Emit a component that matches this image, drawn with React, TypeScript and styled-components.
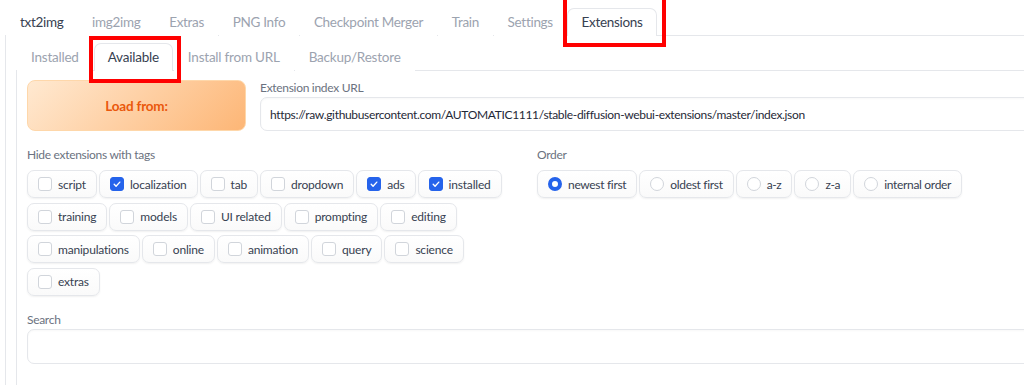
import React from 'react'
import styled, { createGlobalStyle } from 'styled-components'

const GlobalStyle = createGlobalStyle`
  body {
    margin: 0;
    background: #ffffff;
    font-family: Lato, "Open Sans", "Liberation Sans", sans-serif;
    overflow: hidden;
  }
`

const Page = styled.div`
  width: 1050px;
  padding-left: 5px;
  position: relative;
`

const TabNav = styled.div<{ $inner?: boolean }>`
  display: flex;
  gap: ${(p) => (p.$inner ? '1px' : '0.6px')};
  padding-left: 1px;
  padding-top: ${(p) => (p.$inner ? '0' : '8px')};
  border-bottom: 1px solid #e5e7eb;
`

const Tab = styled.div<{ $active?: boolean; $dark?: boolean; $inner?: boolean }>`
  height: 27px;
  line-height: 27px;
  padding: 0 13px;
  border: 1px solid ${(p) => (p.$active ? '#e5e7eb' : 'transparent')};
  border-bottom: none;
  border-radius: 7px 7px 0 0;
  margin-bottom: -1px;
  background: #fff;
  font-size: 13.5px;
  letter-spacing: ${(p) => (p.$inner ? '-0.22px' : '-0.3px')};
  white-space: nowrap;
  color: ${(p) => (p.$active || p.$dark ? '#374151' : '#9ca3af')};
`

const Panel = styled.div<{ $pad: string }>`
  border: 1px solid #e5e7eb;
  border-top: none;
  padding: ${(p) => p.$pad};
`

const Row = styled.div<{ $top?: number }>`
  display: flex;
  gap: 14px;
  align-items: flex-start;
  margin-top: ${(p) => p.$top ?? 0}px;
`

const Column = styled.div<{ $top?: number }>`
  flex: 1;
  min-width: 0;
  margin-top: ${(p) => p.$top ?? 0}px;
`

const LoadButton = styled.button`
  width: 219px;
  height: 51px;
  flex: none;
  border: 1px solid #fed7aa;
  border-radius: 8px;
  background: linear-gradient(135deg, #ffe9d1 0%, #fdb676 100%);
  color: #ea580c;
  font-family: inherit;
  font-weight: 700;
  font-size: 13.5px;
  letter-spacing: -0.2px;
`

const Label = styled.div<{ $gapBelow: number }>`
  font-size: 12px;
  line-height: 16px;
  letter-spacing: -0.3px;
  color: #6b7280;
  margin-bottom: ${(p) => p.$gapBelow}px;
`

const TextInput = styled.div<{ $h: number }>`
  height: ${(p) => p.$h}px;
  box-sizing: border-box;
  border: 1px solid #e5e7eb;
  border-radius: 7px;
  box-shadow: inset 0 1px 2px rgba(0, 0, 0, 0.03);
  padding: 0 9px;
  display: flex;
  align-items: center;
  font-size: 12px;
  letter-spacing: -0.33px;
  color: #1f2937;
  white-space: nowrap;
  overflow: hidden;
`

const ChipWrap = styled.div`
  display: flex;
  flex-wrap: wrap;
  gap: 4.5px 2px;
`

const Chip = styled.label<{ $radio?: boolean }>`
  height: 28px;
  box-sizing: border-box;
  display: inline-flex;
  align-items: center;
  gap: 6px;
  padding: 0 10px;
  border: 1px solid #e5e7eb;
  border-radius: 7px;
  background: linear-gradient(to bottom, #ffffff, #fafafa);
  box-shadow: 0 1px 2px rgba(0, 0, 0, 0.06);
  font-size: 12px;
  letter-spacing: ${(p) => (p.$radio ? '-0.32px' : '-0.2px')};
  color: #374151;
  white-space: nowrap;
`

const Box = styled.span<{ $on?: boolean }>`
  width: 14px;
  height: 14px;
  box-sizing: border-box;
  border-radius: 3px;
  border: 1px solid ${(p) => (p.$on ? '#2563eb' : '#d1d5db')};
  background: ${(p) => (p.$on ? '#2563eb' : '#fff')};
  display: inline-flex;
  align-items: center;
  justify-content: center;
`

const Radio = styled.span<{ $on?: boolean }>`
  width: 14px;
  height: 14px;
  box-sizing: border-box;
  border-radius: 50%;
  border: ${(p) => (p.$on ? '4px solid #2563eb' : '1px solid #d1d5db')};
  background: #fff;
`

const Highlight = styled.div`
  position: absolute;
  border: 4px solid #ff0000;
  box-sizing: border-box;
  pointer-events: none;
`

const topTabs = ['txt2img', 'img2img', 'Extras', 'PNG Info', 'Checkpoint Merger', 'Train', 'Settings', 'Extensions']
const subTabs = ['Installed', 'Available', 'Install from URL', 'Backup/Restore']

const tags: [string, boolean][] = [
  ['script', false], ['localization', true], ['tab', false], ['dropdown', false], ['ads', true], ['installed', true],
  ['training', false], ['models', false], ['UI related', false], ['prompting', false], ['editing', false],
  ['manipulations', false], ['online', false], ['animation', false], ['query', false], ['science', false],
  ['extras', false],
]

const orders = ['newest first', 'oldest first', 'a-z', 'z-a', 'internal order']

const Check = () => (
  <svg width="10" height="10" viewBox="0 0 16 16">
    <path d="M3.5 8.5l3 3 6-6.5" fill="none" stroke="#fff" strokeWidth="2.2" strokeLinecap="round" strokeLinejoin="round" />
  </svg>
)

export default function App() {
  return (
    <>
      <GlobalStyle />
      <Page>
        <TabNav>
          {topTabs.map((t, i) => (
            <Tab key={t} $active={t === 'Extensions'} $dark={i === 0}>{t}</Tab>
          ))}
        </TabNav>
        <Panel $pad="7px 10px 0 10px">
          <TabNav $inner>
            {subTabs.map((t) => (
              <Tab key={t} $inner $active={t === 'Available'}>{t}</Tab>
            ))}
          </TabNav>
          <Panel $pad="9px 10px 30px 10px">
            <Row>
              <LoadButton>Load from:</LoadButton>
              <Column>
                <Label $gapBelow={1}>Extension index URL</Label>
                <TextInput $h={34}>
                  https://raw.githubusercontent.com/AUTOMATIC1111/stable-diffusion-webui-extensions/master/index.json
                </TextInput>
              </Column>
            </Row>
            <Row $top={16}>
              <Column>
                <Label $gapBelow={7}>Hide extensions with tags</Label>
                <ChipWrap>
                  {tags.map(([t, on]) => (
                    <Chip key={t}>
                      <Box $on={on}>{on && <Check />}</Box>
                      {t}
                    </Chip>
                  ))}
                </ChipWrap>
              </Column>
              <Column>
                <Label $gapBelow={7}>Order</Label>
                <ChipWrap>
                  {orders.map((o, i) => (
                    <Chip key={o} $radio>
                      <Radio $on={i === 0} />
                      {o}
                    </Chip>
                  ))}
                </ChipWrap>
              </Column>
            </Row>
            <Column $top={16}>
              <Label $gapBelow={1}>Search</Label>
              <TextInput $h={35} />
            </Column>
          </Panel>
        </Panel>
        <Highlight style={{ left: 563, top: -4, width: 103, height: 51 }} />
        <Highlight style={{ left: 89, top: 36, width: 92, height: 47 }} />
      </Page>
    </>
  )
}
